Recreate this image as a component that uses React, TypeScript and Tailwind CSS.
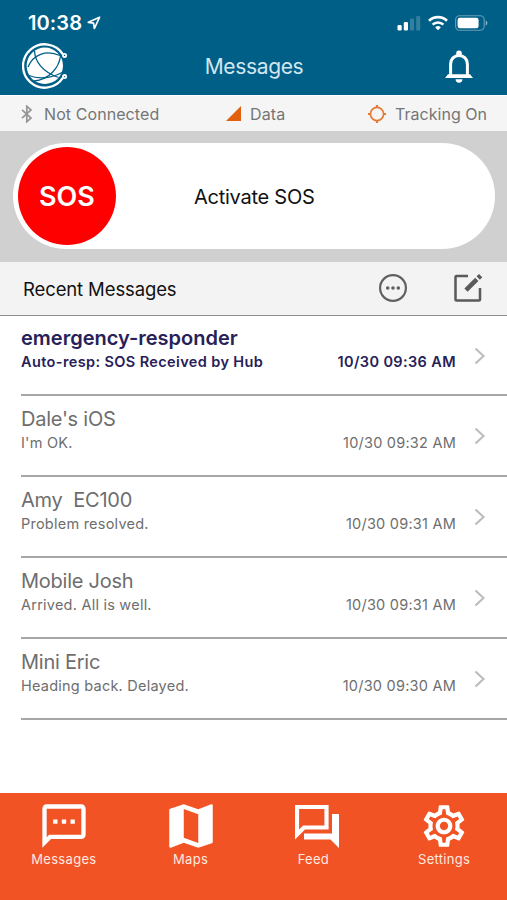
import type { ReactNode } from "react";
import { MdMap, MdOutlineSettings, MdOutlineSms } from "react-icons/md";
import clsx from "clsx";

type Message = {
  from: string;
  text: string;
  time: string;
  unread?: boolean;
};

const messages: Message[] = [
  { from: "emergency-responder", text: "Auto-resp: SOS Received by Hub", time: "10/30 09:36 AM", unread: true },
  { from: "Dale's iOS", text: "I'm OK.", time: "10/30 09:32 AM" },
  { from: "Amy  EC100", text: "Problem resolved.", time: "10/30 09:31 AM" },
  { from: "Mobile Josh", text: "Arrived. All is well.", time: "10/30 09:31 AM" },
  { from: "Mini Eric", text: "Heading back. Delayed.", time: "10/30 09:30 AM" },
];

export default function App() {
  return (
    <div className="flex h-[900px] w-[507px] flex-col overflow-hidden bg-white font-['Inter',sans-serif] text-[#6e6e6e]">
      <Header />
      <ConnectionBar />
      <SosSlider />
      <ListHeader />
      <ul className="flex-1">
        {messages.map((m) => (
          <MessageRow key={m.from} message={m} />
        ))}
      </ul>
      <TabBar />
    </div>
  );
}

function Header() {
  return (
    <header className="flex h-[95px] flex-col bg-[#005f87] text-white">
      <div className="flex h-[40px] items-center pt-[6px] pr-[19px] pl-[28px]">
        <span className="text-[20px] leading-6 font-semibold tracking-[0.1px]">10:38</span>
        <svg className="mt-[-1px] ml-[5px] size-[14px]" viewBox="0 0 14 14" fill="none" stroke="white" strokeWidth="1.7" strokeLinejoin="round">
          <path d="M12.6 1.2 1.3 6.3l5.2.9.9 5.3z" />
        </svg>
        <div className="ml-auto flex items-center gap-[7px]">
          <SignalIcon />
          <WifiIcon />
          <BatteryIcon />
        </div>
      </div>
      <div className="grid h-[52px] grid-cols-[1fr_auto_1fr] items-center pr-[34px] pl-[35px]">
        <Logo />
        <h1 className="mt-[2px] text-[21px] leading-6 font-normal tracking-[-0.35px] text-[#d3e6f0]">Messages</h1>
        <BellIcon />
      </div>
    </header>
  );
}

function SignalIcon() {
  return (
    <svg className="h-[16px] w-[24px]" viewBox="0 0 24 16" fill="white">
      <rect x="0.5" y="10" width="4.2" height="5.4" rx="1.2" />
      <rect x="6.8" y="7" width="4.2" height="8.4" rx="1.2" />
      <rect x="13" y="3.6" width="4" height="11.8" rx="1.2" opacity="0.2" />
      <rect x="19.2" y="1" width="4" height="14.4" rx="1.2" opacity="0.2" />
    </svg>
  );
}

function WifiIcon() {
  return (
    <svg className="h-[16px] w-[20px]" viewBox="0 0 20 16" fill="none" stroke="white" strokeWidth="2.6">
      <path d="M1 5.7a13 13 0 0 1 18 0" />
      <path d="M4.6 9.6a7.8 7.8 0 0 1 10.8 0" />
      <path d="m10 15.3-2.8-2.9a4 4 0 0 1 5.6 0z" fill="white" stroke="none" />
    </svg>
  );
}

function BatteryIcon() {
  return (
    <svg className="h-[16px] w-[33px]" viewBox="0 0 33 16">
      <rect x="0.6" y="0.8" width="28.6" height="14.4" rx="4" fill="none" stroke="white" strokeOpacity="0.4" strokeWidth="1.1" />
      <rect x="2.6" y="2.8" width="21" height="10.4" rx="2.3" fill="white" />
      <path d="M30.7 5.4v5.2c1.1-.5 1.7-1.5 1.7-2.6s-.6-2.1-1.7-2.6z" fill="white" opacity="0.5" />
    </svg>
  );
}

function Logo() {
  return (
    <svg className="ml-[-13px] h-[46px] w-[46px]" viewBox="0 0 46 46" fill="none">
      <circle cx="22.8" cy="22.8" r="18.2" fill="white" />
      {/* globe meridians */}
      <g stroke="#005f87" strokeWidth="1.3">
        <path d="M12.500 8C13 18 20 29 36.500 34.500" />
        <path d="M6 24C11 11.500 24 6.500 38 12.500" />
        <path d="M38.500 13C37 25 27 36.500 12 38" />
        <path d="M7 32.500C16 36.500 29 35.500 40 29.500" />
      </g>
      {/* open ring ending in two nodes */}
      <path d="M41 11.300A21.700 21.700 0 1 0 41 34.700" stroke="white" strokeWidth="2.300" />
      <circle cx="42.600" cy="12.400" r="2.500" fill="white" />
      <circle cx="42.600" cy="33.600" r="2.500" fill="white" />
      <circle cx="42.600" cy="12.400" r="0.700" fill="#005f87" />
      <circle cx="42.600" cy="33.600" r="0.700" fill="#005f87" />
    </svg>
  );
}

function BellIcon() {
  return (
    <svg className="h-[33px] w-[28px] justify-self-end" viewBox="0 0 28 33" fill="none">
      <path d="M5.600 25.500V14c0-5 3.600-8.500 8.400-8.500s8.400 3.500 8.400 8.500v11.500" stroke="white" strokeWidth="3" />
      <path d="M3 24.200h22L28 28H0z" fill="white" />
      <circle cx="14" cy="3.400" r="2.800" fill="white" />
      <path d="M10.600 29.300h6.800a3.400 3.400 0 0 1-6.800 0z" fill="white" />
    </svg>
  );
}

function ConnectionBar() {
  return (
    <div className="flex h-[36px] items-center border-t border-white bg-[#f5f5f5] pr-[20px] pl-[21px] text-[16px] leading-5 text-[#757575]">
      <svg className="h-[18px] w-[12px]" viewBox="0 0 12 18" fill="none" stroke="#969696" strokeWidth="1.7">
        <path d="m1 4.8 9 8.2-4.2 3.8V1.2L10 5 1 13.2" />
      </svg>
      <span className="ml-[11px] w-[182px] tracking-[0.08px]">Not Connected</span>
      <svg className="size-[15px]" viewBox="0 0 15 15">
        <path d="M15 0v15H0z" fill="#e2610f" />
      </svg>
      <span className="ml-[9px] tracking-[0.15px]">Data</span>
      <svg className="ml-auto size-[18px]" viewBox="0 0 18 18" fill="none" stroke="#e57a35" strokeWidth="1.7">
        <circle cx="9" cy="9" r="6.6" />
        <path d="M9 0v3M9 15v3M0 9h3M15 9h3" strokeWidth="2.2" />
      </svg>
      <span className="ml-[9px] tracking-[0.02px]">Tracking On</span>
    </div>
  );
}

function SosSlider() {
  return (
    <div className="h-[131px] bg-[#d0d0d0] pt-[12px] pr-[12px] pl-[13px]">
      <div className="flex h-[106px] items-center rounded-full bg-white pl-[5px]">
        <button className="flex size-[98px] items-center justify-center rounded-full bg-[#fe0000] pt-[2px] text-[27px] font-semibold text-white">
          SOS
        </button>
        <span className="mt-[2px] ml-[78px] text-[20px] tracking-[-0.25px] text-[#111]">Activate SOS</span>
      </div>
    </div>
  );
}

function ListHeader() {
  return (
    <div className="flex h-[54px] items-center border-b border-[#8c8c8c] bg-[#f3f3f3] pr-[25px] pl-[23px]">
      <h2 className="mt-[2px] text-[18.5px] tracking-[-0.12px] text-[#111]">Recent Messages</h2>
      <svg className="mt-[-1px] ml-auto size-[28px]" viewBox="0 0 28 28" fill="#616161">
        <circle cx="14" cy="14" r="12.9" fill="none" stroke="#616161" strokeWidth="2.2" />
        <circle cx="8.7" cy="14" r="1.8" />
        <circle cx="14" cy="14" r="1.8" />
        <circle cx="19.3" cy="14" r="1.8" />
      </svg>
      <svg className="mt-[-1px] ml-[47px] size-[28px]" viewBox="0 0 28 28" fill="none" stroke="#5a5a5a">
        <path d="M14 2H2.500Q1.500 2 1.500 3v22.500q0 1 1 1h22.500q1 0 1-1V14" strokeWidth="2.500" />
        <path d="M12 16.200 22.800 5.400" strokeWidth="4.600" />
        <path d="m24.200 4 2.400-2.400" strokeWidth="4.600" />
      </svg>
    </div>
  );
}

function MessageRow({ message }: { message: Message }) {
  const { from, text, time, unread } = message;
  return (
    <li className={clsx("ml-[21px] flex border-b-2 border-[#a6a6a6]", unread ? "h-[80px] font-semibold text-[#272059]" : "h-[81px]")}>
      <div className={clsx("flex-1", unread ? "pt-[9px]" : "pt-[10px]")}>
        <div className={clsx("h-[27px] text-[20px] leading-[26px] whitespace-pre", !unread && "tracking-[-0.25px]")}>{from}</div>
        <div className={clsx("flex justify-between text-[14.5px] leading-5", unread ? "tracking-[0.38px]" : "tracking-[0.23px]")}>
          <span>{text}</span>
          <span>{time}</span>
        </div>
      </div>
      <svg className="mt-[31px] mr-[21px] ml-[18px] h-[18px] w-[12px]" viewBox="0 0 12 18" fill="none" stroke="#bdbdbd" strokeWidth="2.2">
        <path d="m1.5 1.5 8 7.5-8 7.5" />
      </svg>
    </li>
  );
}

function TabBar() {
  return (
    <nav className="grid h-[107px] grid-cols-4 bg-[#f15325] text-[#ffe9e0]">
      <Tab label="Messages" labelClassName="ml-[1px]">
        <MdOutlineSms className="ml-[2px] size-[52px] text-white" />
      </Tab>
      <Tab label="Maps" labelClassName="ml-[1px]">
        <MdMap className="ml-[2px] size-[58px] text-white" />
      </Tab>
      <Tab label="Feed" labelClassName="mr-[7px]">
        <svg className="h-[43px] w-[44px]" viewBox="0 0 44 43">
          <path d="M2 2h29.5v20.5H9L2 29.5z" fill="none" stroke="white" strokeWidth="4.2" />
          <path d="M37 9h7v34l-8.5-8.5H9v-6h28z" fill="white" />
        </svg>
      </Tab>
      <Tab label="Settings" labelClassName="ml-[1px]">
        <MdOutlineSettings className="size-[50px] text-white" />
      </Tab>
    </nav>
  );
}

function Tab({ label, labelClassName, children }: { label: string; labelClassName?: string; children: ReactNode }) {
  return (
    <button className="flex flex-col items-center pt-[6px]">
      <span className="flex h-[54px] items-center justify-center">{children}</span>
      <span className={clsx("text-[13px] leading-[13px] tracking-[0.3px]", labelClassName)}>{label}</span>
    </button>
  );
}
